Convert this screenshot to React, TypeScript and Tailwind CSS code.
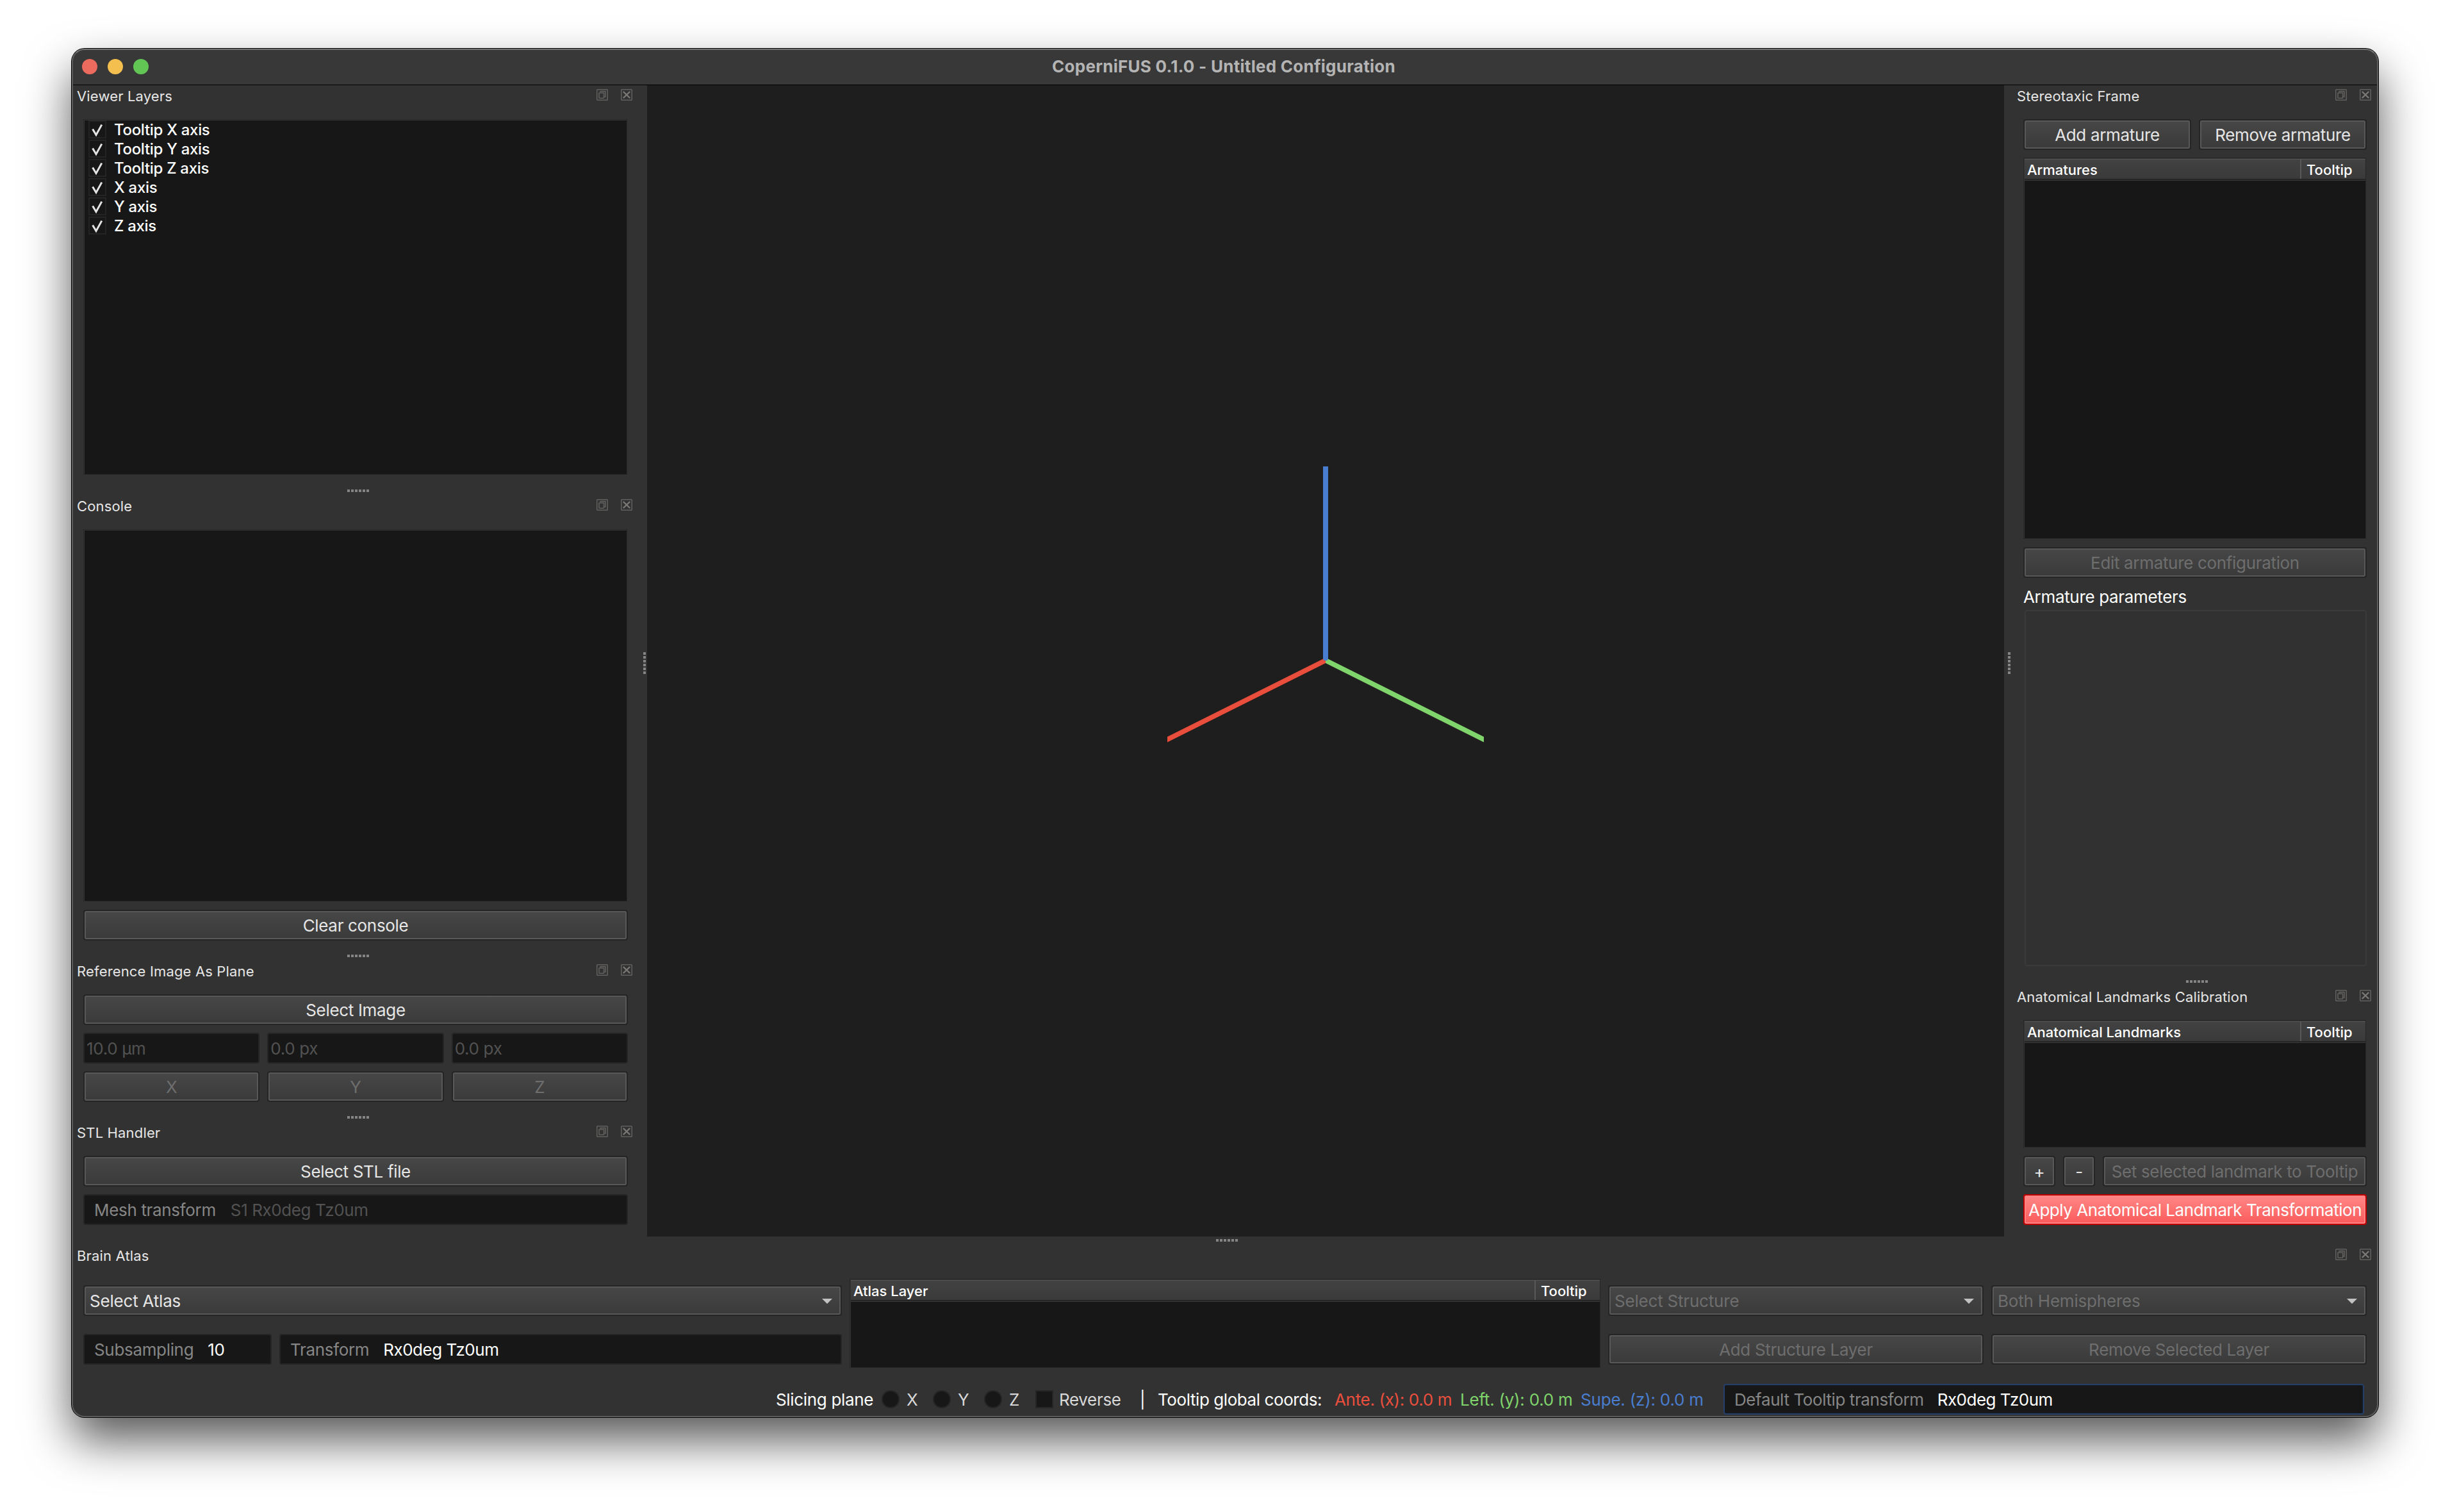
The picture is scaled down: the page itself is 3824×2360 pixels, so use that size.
import type { ReactNode } from "react";

function FloatIcon() {
  return (
    <svg width="18" height="18" viewBox="0 0 18 18" fill="none" stroke="#61605e">
      <rect x="0.75" y="0.75" width="16.5" height="16.5" rx="0.8" strokeWidth="1.5" />
      <path d="M6 5V4.2Q6 3.6 6.6 3.6H13.4Q14 3.6 14 4.2V12H12" strokeWidth="1.6" />
      <rect x="4" y="6" width="7.6" height="8.2" rx="0.6" strokeWidth="1.6" />
    </svg>
  );
}

function CloseIcon() {
  return (
    <svg width="18" height="18" viewBox="0 0 18 18" fill="none" stroke="#61605e">
      <rect x="0.75" y="0.75" width="16.5" height="16.5" rx="0.8" strokeWidth="1.5" />
      <path d="M3.8 4L14.2 14M14.2 4L3.8 14" stroke="#7b7976" strokeWidth="2.4" />
    </svg>
  );
}

function DockTitle({ children }: { children: ReactNode }) {
  return (
    <div className="flex h-8 shrink-0 items-center pl-2 text-[22px] leading-none tracking-[0.16px] text-[#e6e6e6]">
      <span className="flex-1 pt-1">{children}</span>
      <span className="flex gap-5">
        <FloatIcon />
        <CloseIcon />
      </span>
    </div>
  );
}

function Grip({ vertical = false, className = "" }: { vertical?: boolean; className?: string }) {
  return (
    <div className={`flex shrink-0 gap-0.5 ${vertical ? "flex-col" : ""} ${className}`}>
      {[0, 1, 2, 3, 4, 5].map((i) => (
        <span key={i} className="size-1 bg-[#858585]" />
      ))}
    </div>
  );
}

const face =
  "rounded-[4px] border-2 border-[#252525] bg-linear-to-b from-[#474747] to-[#3a3a3a] bg-clip-padding shadow-[inset_0_0_0_2px_#585858]";

function Button({
  children,
  disabled = false,
  className = "",
}: {
  children: ReactNode;
  disabled?: boolean;
  className?: string;
}) {
  return (
    <button
      className={`flex h-12 shrink-0 items-center justify-center pt-px whitespace-nowrap ${face} ${
        disabled ? "text-[#6e6e6e]" : "text-[#e6e6e6]"
      } ${className}`}
    >
      {children}
    </button>
  );
}

function Select({ children, disabled = false }: { children: ReactNode; disabled?: boolean }) {
  return (
    <div
      className={`flex h-12 shrink-0 items-center justify-between pt-px pr-[13px] pl-2 ${face} ${
        disabled ? "text-[#6e6e6e]" : "text-[#e6e6e6]"
      }`}
    >
      <span className="tracking-[-0.2px]">{children}</span>
      <svg width="16" height="8" viewBox="0 0 16 8" fill="#c2c2c2">
        <path d="M0 0H16L8 8Z" />
      </svg>
    </div>
  );
}

function Field({ label, children, className = "" }: { label?: string; children: ReactNode; className?: string }) {
  return (
    <div
      className={`flex h-12 items-center rounded-[4px] border-2 border-[#252525] bg-[#171717] pt-px whitespace-nowrap ${className}`}
    >
      {label && <span className="text-[#868686]">{label}</span>}
      {children}
    </div>
  );
}

function Frame({ children, className = "" }: { children?: ReactNode; className?: string }) {
  return (
    <div
      className={`mr-px mb-px flex flex-col border border-[#272727] bg-[#171717] shadow-[inset_1px_1px_0_0_#353535] ${className}`}
    >
      {children}
    </div>
  );
}

function Table({ title, className = "" }: { title: string; className?: string }) {
  const cell =
    "flex items-center border-t border-[#565656] bg-linear-to-b from-[#424242] to-[#3a3a3a] pt-0.5";
  return (
    <Frame className={className}>
      <div className="ml-px flex h-[35px] border-b border-[#3a3a3a] pt-px text-[22px] leading-none font-medium tracking-[-0.02px] text-white">
        <div className="flex flex-1 border-b-2 border-[#252525]">
          <div className={`flex-1 pl-1 ${cell}`}>{title}</div>
          <div className="w-0.5 bg-[#585858]" />
          <div className={`w-[100px] pl-2 ${cell}`}>Tooltip</div>
        </div>
      </div>
    </Frame>
  );
}

const layers = ["Tooltip X axis", "Tooltip Y axis", "Tooltip Z axis", "X axis", "Y axis", "Z axis"];

function LayerRow({ name }: { name: string }) {
  return (
    <div className="flex h-[30px] items-start pl-[7px]">
      <span className="size-7 border-2 border-[#242424]">
        <svg width="24" height="24" viewBox="0 0 24 24" fill="none" stroke="#e4e4e4" strokeWidth="3">
          <path d="M4.6 11.6L10 20.6L18.8 4.6" />
        </svg>
      </span>
      <span className="pl-3 text-[24px] leading-[30px] font-medium tracking-[-0.31px] text-white">{name}</span>
    </div>
  );
}

function LeftDocks() {
  return (
    <aside className="-mt-px flex w-[898px] shrink-0">
      <div className="flex w-[888px] flex-col">
        <div className="pr-[13px]">
          <DockTitle>Viewer Layers</DockTitle>
        </div>
        <Frame className="mt-[22px] ml-[18px] h-[555px] w-[849px] pt-px">
          {layers.map((n) => (
            <LayerRow key={n} name={n} />
          ))}
        </Frame>

        <Grip className="mt-[22px] mb-1 ml-[430px]" />
        <div className="pr-[13px]">
          <DockTitle>Console</DockTitle>
        </div>
        <div className="mt-[22px] ml-[18px] flex w-[850px] flex-col">
          <Frame className="h-[581px]" />
          <Button className="mt-3">Clear console</Button>
        </div>

        <Grip className="mt-[22px] mb-1 ml-[430px]" />
        <div className="pr-[13px]">
          <DockTitle>Reference Image As Plane</DockTitle>
        </div>
        <div className="mt-[22px] ml-[18px] flex w-[850px] flex-col gap-3">
          <Button>Select Image</Button>
          <div className="grid grid-cols-3 gap-3">
            <Field className="pl-[3px] text-[#525252]">10.0 µm</Field>
            <Field className="pl-[3px] text-[#525252]">0.0 px</Field>
            <Field className="pl-[3px] text-[#525252]">0.0 px</Field>
          </div>
          <div className="grid grid-cols-3 gap-3">
            <Button disabled>X</Button>
            <Button disabled>Y</Button>
            <Button disabled>Z</Button>
          </div>
        </div>

        <Grip className="mt-[22px] mb-1 ml-[430px]" />
        <div className="pr-[13px]">
          <DockTitle>STL Handler</DockTitle>
        </div>
        <div className="mt-[22px] ml-[18px] flex w-[850px] flex-col gap-3">
          <Button>Select STL file</Button>
          <Field label="Mesh transform" className="gap-[23px] pl-[15px]">
            <span className="tracking-[-0.4px] text-[#525252]">S1 Rx0deg Tz0um</span>
          </Field>
        </div>
      </div>
      <Grip vertical className="mt-[886px] ml-1" />
    </aside>
  );
}

function RightDocks() {
  return (
    <aside className="-mt-px flex w-[584px] shrink-0">
      <Grip vertical className="mt-[886px] mr-0.5 ml-1.5" />
      <div className="flex flex-1 flex-col">
        <div className="pr-[11px]">
          <DockTitle>Stereotaxic Frame</DockTitle>
        </div>
        <div className="mt-[22px] ml-[18px] flex w-[536px] flex-col">
          <div className="grid grid-cols-2 gap-3">
            <Button>Add armature</Button>
            <Button>Remove armature</Button>
          </div>
          <Table title="Armatures" className="mt-3 h-[595px]" />
          <Button disabled className="mt-3">
            Edit armature configuration
          </Button>
          <div className="flex h-[50px] items-center pt-[9px] text-white">Armature parameters</div>
          <div className="ml-0.5 h-[556px] rounded-[4px] border-2 border-[#3a3a3a] bg-[#313131]" />
        </div>

        <Grip className="mt-[22px] mb-1 ml-[272px]" />
        <div className="pr-[11px]">
          <DockTitle>Anatomical Landmarks Calibration</DockTitle>
        </div>
        <div className="mt-[22px] ml-[18px] flex w-[536px] flex-col gap-3">
          <Table title="Anatomical Landmarks" className="h-[199px]" />
          <div className="flex gap-3">
            <Button className="w-[50px]">+</Button>
            <Button className="w-[50px]">-</Button>
            <Button disabled className="flex-1">
              Set selected landmark to Tooltip
            </Button>
          </div>
          <button className="flex h-12 items-center justify-center rounded-[4px] border-2 border-[#c00000] bg-linear-to-b from-[#ff8787] to-[#fa5a5a] bg-clip-padding pt-px tracking-[-0.46px] whitespace-nowrap text-white shadow-[inset_0_0_0_2px_#ff8383]">
            Apply Anatomical Landmark Transformation
          </button>
        </div>
      </div>
    </aside>
  );
}

function Viewport() {
  return (
    <main className="flex-1 bg-[#1e1e1e]">
      <svg className="block" width="2118" height="1797" viewBox="1010 133 2118 1797">
        <path d="M2069 1026.5L1822 1150V1158.5L2069 1035Z" fill="#e94e3c" />
        <path d="M2069 1026.5L2316 1150V1158.5L2069 1035Z" fill="#7fd46b" />
        <path d="M2065 728H2073V1028L2071.500 1031H2066.500L2065 1028Z" fill="#497dcf" />
      </svg>
    </main>
  );
}

function BrainAtlas() {
  return (
    <section className="flex flex-col">
      <Grip className="mt-1 mb-1 ml-[1786px]" />
      <div className="pr-[11px]">
        <DockTitle>Brain Atlas</DockTitle>
      </div>
      <div className="mx-[18px] mt-[22px] flex h-[140px] gap-3">
        <div className="flex w-[1184px] flex-col gap-7 pt-2.5">
          <Select>Select Atlas</Select>
          <div className="flex gap-3">
            <Field label="Subsampling" className="w-[294px] gap-[22px] pl-[15px]">
              <span className="text-white">10</span>
            </Field>
            <Field label="Transform" className="flex-1 gap-[22px] pl-[15px]">
              <span className="tracking-[-0.5px] text-white">Rx0deg Tz0um</span>
            </Field>
          </div>
        </div>
        <Table title="Atlas Layer" className="flex-1" />
        <div className="-ml-px grid w-[1184px] grid-cols-2 content-start gap-x-3 gap-y-7 pt-2.5">
          <Select disabled>Select Structure</Select>
          <Select disabled>Both Hemispheres</Select>
          <Button disabled>Add Structure Layer</Button>
          <Button disabled>Remove Selected Layer</Button>
        </div>
      </div>
    </section>
  );
}

function StatusBar() {
  return (
    <footer className="mt-6 mb-1 flex h-12 items-center pl-[1099px] whitespace-nowrap text-white">
      <span className="w-[165px] pt-px">Slicing plane</span>
      {["X", "Y", "Z"].map((axis) => (
        <label key={axis} className="flex w-20 items-center gap-[11px] text-[#d8d8d8]">
          <span className="size-7 rounded-full border-2 border-[#242424] bg-[#171717]" />
          <span className="pt-px">{axis}</span>
        </label>
      ))}
      <label className="flex w-[163px] items-center gap-[9px] text-[#d8d8d8]">
        <span className="size-7 border-2 border-[#262626] bg-[#171717]" />
        <span className="pt-px">Reverse</span>
      </label>
      <span className="w-7 pt-px">|</span>
      <span className="w-[276px] pt-px tracking-[-0.42px]">Tooltip global coords:</span>
      <span className="w-[196px] pt-px text-[#ea4f3d]">Ante. (x): 0.0 m</span>
      <span className="w-[188px] pt-px tracking-[-0.24px] text-[#7fd46b]">Left. (y): 0.0 m</span>
      <span className="w-[223px] pt-px tracking-[-0.2px] text-[#497dcf]">Supe. (z): 0.0 m</span>
      <div className="flex h-12 w-[1000px] items-center gap-[21px] rounded-[4px] border-2 border-[#263f68] bg-[#171717] pt-px pl-[15px] shadow-[inset_0_0_0_1px_#141a22]">
        <span className="tracking-[-0.4px] text-[#868686]">Default Tooltip transform</span>
        <span className="tracking-[-0.5px] text-white">Rx0deg Tz0um</span>
      </div>
    </footer>
  );
}

export default function App() {
  return (
    <div className="h-[2360px] w-[3824px] overflow-hidden bg-white pt-[76px] pl-[112px] font-[Inter,sans-serif] text-[26px] leading-none tracking-[-0.33px]">
      <div className="relative flex h-[2136px] w-[3600px] flex-col rounded-[20px] bg-[#323232] shadow-[0_0_0_1px_#000,0_36px_72px_rgba(0,0,0,0.66)]">
        <header className="flex h-14 shrink-0 items-center rounded-t-[20px] bg-[#383838]">
          <div className="flex w-[1530px] gap-4 pl-4">
            <span className="size-6 rounded-full bg-[#ed6a5f]" />
            <span className="size-6 rounded-full bg-[#f5bf4f]" />
            <span className="size-6 rounded-full bg-[#62c655]" />
          </div>
          <h1 className="text-[26px] font-bold tracking-[0.27px] text-[#b4b4b4]">
            CoperniFUS 0.1.0 - Untitled Configuration
          </h1>
        </header>
        <div className="flex h-[1798px] shrink-0 border-t border-black">
          <LeftDocks />
          <Viewport />
          <RightDocks />
        </div>
        <BrainAtlas />
        <StatusBar />
        <div className="pointer-events-none absolute inset-0 rounded-[20px] border-2 border-[#5c5c5c] border-t-[#747474]" />
      </div>
    </div>
  );
}
